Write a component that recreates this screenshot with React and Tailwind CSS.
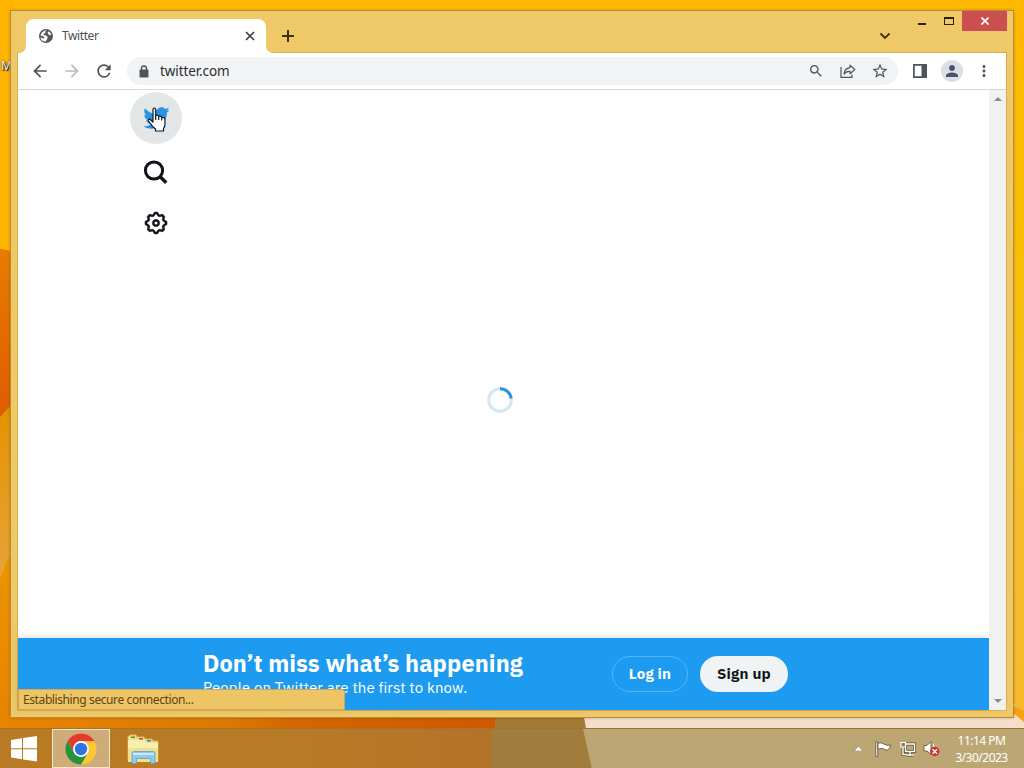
import React from "react";
import {
  MdArrowBack,
  MdArrowForward,
  MdRefresh,
  MdLock,
  MdSearch,
  MdStarBorder,
  MdPerson,
  MdMoreVert,
} from "react-icons/md";

const GEAR =
  "M10.54 1.75h2.92l1.57 2.36c.11.17.32.25.53.21l2.53-.59 2.17 2.17-.58 2.54c-.05.2.04.41.21.53l2.36 1.57v2.92l-2.36 1.57c-.17.12-.26.33-.21.53l.58 2.54-2.17 2.17-2.53-.59c-.21-.04-.42.04-.53.21l-1.57 2.36h-2.92l-1.58-2.36c-.11-.17-.32-.25-.52-.21l-2.54.59-2.17-2.17.58-2.54c.05-.2-.03-.41-.21-.53l-2.35-1.57v-2.92L4.1 8.97c.18-.12.26-.33.21-.53L3.73 5.9 5.9 3.73l2.54.59c.2.04.41-.04.52-.21l1.58-2.36zm1.07 2l-.98 1.47C10.05 6.08 9 6.5 7.99 6.27l-1.46-.34-.6.6.33 1.46c.24 1.01-.18 2.07-1.05 2.64l-1.46.98v.78l1.46.98c.87.57 1.29 1.63 1.05 2.64l-.33 1.46.6.6 1.46-.34c1.01-.23 2.06.19 2.64 1.05l.98 1.47h.78l.97-1.47c.58-.86 1.63-1.28 2.65-1.05l1.45.34.61-.6-.34-1.46c-.23-1.01.18-2.07 1.05-2.64l1.47-.98v-.78l-1.47-.98c-.87-.57-1.28-1.63-1.05-2.64l.34-1.46-.61-.6-1.45.34c-1.02.23-2.07-.19-2.65-1.05l-.97-1.47h-.78zM12 10.5c-.83 0-1.5.67-1.5 1.5s.67 1.5 1.5 1.5c.82 0 1.5-.67 1.5-1.5s-.68-1.5-1.5-1.5zM8.5 12c0-1.93 1.56-3.5 3.5-3.5 1.93 0 3.5 1.57 3.5 3.5s-1.57 3.5-3.5 3.5c-1.94 0-3.5-1.57-3.5-3.5z";

const BIRD =
  "M23.643 4.937c-.835.37-1.732.62-2.675.733.962-.576 1.7-1.49 2.048-2.578-.9.534-1.897.922-2.958 1.13-.85-.904-2.06-1.47-3.4-1.47-2.572 0-4.658 2.086-4.658 4.66 0 .364.042.718.12 1.06-3.873-.195-7.304-2.05-9.602-4.868-.4.69-.63 1.49-.63 2.342 0 1.616.823 3.043 2.072 3.878-.764-.025-1.482-.234-2.11-.583v.06c0 2.257 1.605 4.14 3.737 4.568-.392.106-.803.162-1.227.162-.3 0-.593-.028-.877-.082.593 1.85 2.313 3.198 4.352 3.234-1.595 1.25-3.604 1.995-5.786 1.995-.376 0-.747-.022-1.112-.065 2.062 1.323 4.51 2.093 7.14 2.093 8.57 0 13.255-7.098 13.255-13.254 0-.2-.005-.402-.014-.602.91-.658 1.7-1.477 2.323-2.41z";

function Wallpaper() {
  return (
    <svg className="absolute inset-0" width="1024" height="768" viewBox="0 0 1024 768">
      <defs>
        <linearGradient id="right" x1="0" y1="0" x2="0" y2="1">
          <stop offset="0" stopColor="#ffb900" />
          <stop offset="0.3" stopColor="#f8bf00" />
          <stop offset="0.6" stopColor="#f6c02a" />
          <stop offset="1" stopColor="#f8b82c" />
        </linearGradient>
        <linearGradient id="red" x1="0" y1="0" x2="0" y2="1">
          <stop offset="0" stopColor="#e87c00" />
          <stop offset="1" stopColor="#df5b04" />
        </linearGradient>
        <linearGradient id="gold" x1="0" y1="0" x2="0" y2="1">
          <stop offset="0" stopColor="#e39300" />
          <stop offset="1" stopColor="#e8a339" />
        </linearGradient>
        <linearGradient id="left" x1="0" y1="0" x2="0" y2="1">
          <stop offset="0" stopColor="#ec9500" />
          <stop offset="1" stopColor="#e98400" />
        </linearGradient>
        <linearGradient id="floor" x1="0" y1="0" x2="1" y2="0">
          <stop offset="0" stopColor="#e98400" />
          <stop offset="0.45" stopColor="#db7a00" />
          <stop offset="0.6" stopColor="#d46500" />
          <stop offset="1" stopColor="#d05800" />
        </linearGradient>
      </defs>
      <rect width="1024" height="768" fill="url(#right)" />
      <path d="M0 0H14V260H0Z" fill="#ffb400" />
      <path d="M0 249Q8 248 14 255V420H0Z" fill="url(#red)" />
      <path d="M0 417L14 402V560L0 580Z" fill="url(#gold)" />
      <path d="M0 578L14 545V720H0Z" fill="url(#left)" />
      <rect y="714" width="497" height="54" fill="url(#floor)" />
      <rect x="495" y="700" width="100" height="68" fill="#a27a34" />
      <path d="M581 700H1012L1024 722V768H593Z" fill="#f5dfcb" />
      <path d="M1010 704L1024 711V722L1012 712Z" fill="#f7a20e" />
    </svg>
  );
}

function ChromeLogo() {
  const seg = "M24 13H43.05A22 22 0 0 0 4.95 13L14.47 29.5A11 11 0 0 1 24 13Z";
  return (
    <svg width="34" height="34" viewBox="0 0 48 48">
      <path d={seg} fill="#e33b2e" />
      <path d={seg} fill="#fcc934" transform="rotate(120 24 24)" />
      <path d={seg} fill="#27933f" transform="rotate(240 24 24)" />
      <circle cx="24" cy="24" r="11.2" fill="#fff" />
      <circle cx="24" cy="24" r="8.8" fill="#2f72e4" />
    </svg>
  );
}

function FolderIcon() {
  return (
    <svg width="32" height="32" viewBox="0 0 32 32">
      <path d="M1 3L3 1H9L10 3H17L18 5H25L26 7H31V27H1Z" fill="#f0dd8c" stroke="#d9bd61" strokeWidth=".8" />
      <path d="M4 2.5H8V4H4Z" fill="#2f9e3b" />
      <path d="M12 4H16V5.500H12Z" fill="#d8452e" />
      <path d="M20 6H24V7.500H20Z" fill="#3877c4" />
      <path d="M1 6H18L20 9H31V28H1Z" fill="#f8eeb0" />
      <path d="M1 14H31V28H1Z" fill="#f0e08f" />
      <path d="M5 19Q5 17.500 7 17.500H26Q28 17.500 28 19V29.500H23.500V24.500H9.500V29.500H5Z" fill="#8fcaec" stroke="#5a9fcb" strokeWidth=".8" />
      <path d="M6 19H27V21H6Z" fill="#cdeafa" />
    </svg>
  );
}

function TitleBar() {
  return (
    <div className="flex h-[42px] pl-[7px] text-[#41300f]">
      {/* active tab, with the flared feet */}
      <div className="relative mt-[8px] ml-[8px] flex h-[34px] w-[240px] items-center rounded-t-[8px] bg-white pl-[12px] pr-[11px]">
        <svg className="absolute -left-[8px] bottom-0" width="8" height="8" viewBox="0 0 8 8">
          <path d="M8 0V8H0Q8 8 8 0Z" fill="#fff" />
        </svg>
        <svg className="absolute -right-[8px] bottom-0" width="8" height="8" viewBox="0 0 8 8">
          <path d="M0 0V8H8Q0 8 0 0Z" fill="#fff" />
        </svg>
        <svg width="16" height="16" viewBox="0 0 16 16">
          <circle cx="8" cy="8" r="7" fill="#55585c" />
          <path d="M8.800 2.300L7.300 3.600V5L5.500 5.700L5.800 7.300L8.200 7.500L9.700 9L9 11.200L7.600 13.600Q3.200 13.500 2.400 9.200L5.600 10.800L6.500 9.500L4.700 7.900L2.500 7.500Q3.400 3 8.800 2.300Z" fill="#fff" />
          <path d="M11 3.200L13.500 6.500L11.800 7.200L10 6L9.600 4.500Z" fill="#fff" />
        </svg>
        <span className="ml-[8px] flex-1 text-[12px] leading-4 tracking-[-0.4px] text-[#4b4e52]">Twitter</span>
        <svg width="10" height="10" viewBox="0 0 10 10">
          <path d="M1 1L9 9M9 1L1 9" stroke="#3c4043" strokeWidth="1.700" />
        </svg>
      </div>
      <svg className="ml-[16px] mt-[19px]" width="12" height="12" viewBox="0 0 12 12">
        <path d="M6 0V12M0 6H12" stroke="currentColor" strokeWidth="2" />
      </svg>
      <div className="flex-1" />
      <svg className="mt-[21px] mr-[27px]" width="12" height="8" viewBox="0 0 12 8">
        <path d="M1.500 1.500L6 6L10.500 1.500" fill="none" stroke="currentColor" strokeWidth="1.800" />
      </svg>
      <div className="mt-[12px] mr-[18px] h-[2px] w-[8px] bg-[#2d1e08]" />
      <div className="mt-[6px] mr-[8px] h-[8px] w-[10px] border border-t-2 border-[#2d1e08]" />
      <div className="mr-[6px] flex h-[20px] w-[45px] items-center justify-center bg-[#cb4e50]">
        <svg width="8" height="8" viewBox="0 0 8 8">
          <path d="M.5 .5L7.500 7.500M7.500 .5L.5 7.500" stroke="#fff" strokeWidth="1.700" />
        </svg>
      </div>
    </div>
  );
}

function Toolbar() {
  return (
    <div className="flex h-[37px] items-center border-b border-[#d5d7da] bg-white pl-[12px] text-[#505357]">
      <MdArrowBack className="h-5 w-5" />
      <MdArrowForward className="ml-[12px] h-5 w-5 text-[#b9bbbe]" />
      <MdRefresh className="ml-[12px] h-5 w-5" />
      <div className="ml-[13px] flex h-[28px] w-[771px] shrink-0 items-center rounded-full bg-[#f1f3f4] pl-[10px] pr-[9px]">
        <svg className="mx-[2px]" width="10" height="13" viewBox="0 0 10 13">
          <rect x=".5" y="4.500" width="9" height="8" rx="1" fill="currentColor" />
          <path d="M2.500 5V3.300Q2.500 1 5 1T7.500 3.300V5" fill="none" stroke="currentColor" strokeWidth="1.400" />
        </svg>
        <span className="ml-[9px] flex-1 text-[13.5px] leading-5 tracking-[-0.1px] text-[#2b2e31]">twitter.com</span>
        <MdSearch className="h-4 w-4" />
        <svg className="ml-[16px]" width="16" height="16" viewBox="0 0 16 16" fill="none" stroke="currentColor" strokeWidth="1.200">
          <path d="M1 4V14.300H12V11.500" />
          <path d="M10 2.200L14.800 6.500L10 10.700V8.400Q6.200 8 4 11.200Q4.300 5.500 10 4.600Z" strokeLinejoin="round" />
        </svg>
        <MdStarBorder className="ml-[15px] h-[18px] w-[18px]" />
      </div>
      <svg className="ml-[14px] shrink-0" width="16" height="14" viewBox="0 0 16 14">
        <path d="M1.900 .9H14.100V13.100H1.900Z" fill="none" stroke="currentColor" strokeWidth="1.700" />
        <path d="M9.500 1H15V13H9.500Z" fill="currentColor" />
      </svg>
      <div className="ml-[13px] flex h-[22px] w-[22px] shrink-0 items-center justify-center rounded-full bg-[#dbdfe7]">
        <MdPerson className="h-[18px] w-[18px] text-[#4a5368]" />
      </div>
      <MdMoreVert className="ml-[12px] h-[18px] w-[18px] shrink-0" />
    </div>
  );
}

function Page() {
  return (
    <div className="relative flex h-[620px] bg-white">
      <div className="flex flex-1 flex-col">
        <div className="relative flex-1 pl-[112px] pt-[2px]">
          <nav className="flex w-[52px] flex-col items-center text-[#0f1419]">
            <div className="flex h-[52px] w-[52px] items-center justify-center rounded-full bg-[#e3e6e7]">
              <svg width="28" height="28" viewBox="0 0 24 24" fill="#2b92e2">
                <path d={BIRD} />
              </svg>
            </div>
            <svg className="mt-[15px]" width="26" height="26" viewBox="0 0 26 26" fill="none" stroke="currentColor">
              <circle cx="11" cy="11.500" r="8.600" strokeWidth="3" />
              <path d="M17.200 17.700L23.300 23.800" strokeWidth="3.400" />
            </svg>
            <svg className="mt-[25px]" width="26" height="26" viewBox="0 0 24 24" fill="currentColor" stroke="currentColor" strokeWidth=".3">
              <path d={GEAR} />
            </svg>
          </nav>
          {/* loading ring */}
          <svg className="absolute left-[469px] top-[297px]" width="26" height="26" viewBox="0 0 26 26" fill="none" strokeWidth="3">
            <circle cx="13" cy="13" r="11.300" stroke="#d3e8f3" />
            <path d="M13 1.700A11.300 11.300 0 0 1 24.200 11.500" stroke="#2b93dd" />
          </svg>
          {/* mouse pointer */}
          <svg className="absolute left-[129px] top-[17px]" width="20" height="26" viewBox="0 0 20 26">
            <path
              d="M6 2.500Q6 1 7.300 1T8.700 2.500V8.500Q11 7.600 11.700 9.400Q14 8.700 14.600 10.500Q18 10 18 13V17Q18 19.500 16.500 21.500V24H8.500V22Q5 19.500 3.500 16.500L1.500 14Q1 12 3 12.200L6 15Z"
              fill="#fff"
              stroke="#111827"
              strokeWidth="1.200"
              strokeLinejoin="round"
            />
            <path d="M8.700 8.500V13M11.700 9.500V13M14.700 10.500V13.500" stroke="#111827" strokeWidth="1.200" />
          </svg>
        </div>
        <div className="flex h-[72px] bg-[#1d9bf0] pl-[185px] text-white shadow-[0_-1px_6px_rgba(0,0,0,0.13)] font-['IBM_Plex_Sans','Inter','Liberation_Sans',sans-serif]">
          <div className="w-[409px] pt-[11px]">
            <div className="whitespace-nowrap text-[23.5px] font-extrabold leading-[29px] tracking-[0.1px]">
              Don’t miss what’s happening
            </div>
            <div className="whitespace-nowrap text-[15px] leading-[20px] tracking-[0.13px]">
              People on Twitter are the first to know.
            </div>
          </div>
          <button className="mt-[18px] h-[36px] w-[76px] rounded-full border border-[#55b5f6] text-[15px] font-bold tracking-[0.2px]">
            Log in
          </button>
          <button className="ml-[12px] mt-[18px] h-[36px] w-[88px] rounded-full bg-[#eff3f4] text-[15px] font-bold tracking-[0.2px] text-[#0f1419]">
            Sign up
          </button>
        </div>
      </div>
      <div className="flex w-[17px] flex-col items-center justify-between bg-[#f1f1ef] py-[7px]">
        <svg width="8" height="4" viewBox="0 0 8 4"><path d="M0 4L4 0L8 4Z" fill="#8b8b8b" /></svg>
        <svg width="8" height="4" viewBox="0 0 8 4"><path d="M0 0L4 4L8 0Z" fill="#8b8b8b" /></svg>
      </div>
      {/* status bubble */}
      <div className="absolute bottom-0 left-0 flex h-[21px] w-[327px] items-center rounded-tr-[3px] border border-[#d3a550] bg-[#eec565] pl-[4px] text-[12px] tracking-[-0.4px] text-[#5b4316]">
        Establishing secure connection...
      </div>
    </div>
  );
}

function Taskbar() {
  return (
    <div className="relative flex h-[40px] items-center border-t border-[#a0762f] text-white">
      <svg className="absolute inset-0" width="1024" height="40" viewBox="0 0 1024 40">
        <defs>
          <linearGradient id="bar" x1="0" y1="0" x2="1" y2="0">
            <stop offset="0" stopColor="#b87a22" />
            <stop offset="0.6" stopColor="#b97a26" />
            <stop offset="1" stopColor="#b47228" />
          </linearGradient>
        </defs>
        <rect width="495" height="40" fill="url(#bar)" />
        <path d="M491 0H583L593 40H491Z" fill="#a07d3c" />
        <path d="M583 0H1024V40H592Z" fill="#bca774" />
      </svg>
      <div className="relative flex h-full w-full items-center">
        <svg className="ml-[10px]" width="28" height="26" viewBox="0 0 28 26" fill="#fff">
          <path d="M1 4L12 2.300V12.300H1ZM13 2.100L27 0V12.300H13ZM1 13.300H12V23.300L1 21.600ZM13 13.300H27V25.500L13 23.400Z" />
        </svg>
        <div className="ml-[14px] flex h-[39px] w-[58px] items-center justify-center border border-[#f6e8cf] bg-[#ceab78]">
          <ChromeLogo />
        </div>
        <div className="ml-[17px] mt-[2px]">
          <FolderIcon />
        </div>
        <div className="flex-1" />
        <svg width="9" height="5" viewBox="0 0 9 5"><path d="M0 5L4.500 0L9 5Z" fill="#fff" stroke="#74604a" strokeWidth=".5" /></svg>
        <svg className="ml-[12px]" width="17" height="16" viewBox="0 0 17 16" fill="#fff" stroke="#5a482c" strokeWidth=".8">
          <path d="M.8 1H2.800V15.500H.8Z" />
          <path d="M3 2.200Q6 1 9 3Q12 5.200 15.800 4Q15 7.500 12.500 9Q9 9 8 7.500Q5 7 3 8.500Z" />
        </svg>
        <svg className="ml-[8px]" width="16" height="16" viewBox="0 0 16 16" fill="none">
          <path d="M5.500 3H14.500V10.500H5.500ZM10 10.500V13.500M6 14H14M3 6V13.500H6" stroke="#5a482c" strokeWidth="2.800" />
          <path d="M5.500 3H14.500V10.500H5.500ZM10 10.500V13.500M6 14H14M3 6V13.500H6" stroke="#fff" strokeWidth="1.400" />
          <path d="M1 1.500H5.500V6H1Z" fill="#8b7750" stroke="#fff" strokeWidth="1.200" />
        </svg>
        <svg className="ml-[7px]" width="18" height="17" viewBox="0 0 18 17">
          <path d="M1 5.500H4L8 1.500V14.500L4 11H1Z" fill="#fff" stroke="#5a482c" strokeWidth=".8" />
          <path d="M10 4Q11.500 6 11 8" fill="none" stroke="#fff" strokeWidth="1.200" />
          <circle cx="11.800" cy="11.500" r="4.700" fill="#cf3331" />
          <path d="M9.600 9.300L14 13.700M14 9.300L9.600 13.700" stroke="#fff" strokeWidth="1.400" />
        </svg>
        <div className="ml-[13px] mr-[15px] w-[55px] whitespace-nowrap text-center text-[12px] leading-[17px] tracking-[-0.5px]">
          <div>11:14 PM</div>
          <div>3/30/2023</div>
        </div>
      </div>
    </div>
  );
}

export default function App() {
  return (
    <div className="relative h-[768px] w-[1024px] overflow-hidden bg-[#ffb800] font-['Segoe_UI','Noto_Sans','Open_Sans',sans-serif]">
      <Wallpaper />
      {/* desktop icon label, mostly behind the window */}
      <span className="absolute left-[1px] top-[58px] text-[12px] leading-4 text-white [text-shadow:0_0_2px_#000,1px_1px_1px_#000]">
        M
      </span>
      <div className="relative flex h-full flex-col">
        <div className="h-[728px] pl-[10px] pt-[10px]">
          <div className="h-[708px] w-[1004px] border border-[#b88b37] bg-[#efc867] shadow-[0_0_3px_rgba(90,50,0,0.3)]">
            <TitleBar />
            <div className="mx-[7px] outline outline-1 outline-[#dcae55]">
              <Toolbar />
              <Page />
            </div>
          </div>
        </div>
        <Taskbar />
      </div>
    </div>
  );
}
